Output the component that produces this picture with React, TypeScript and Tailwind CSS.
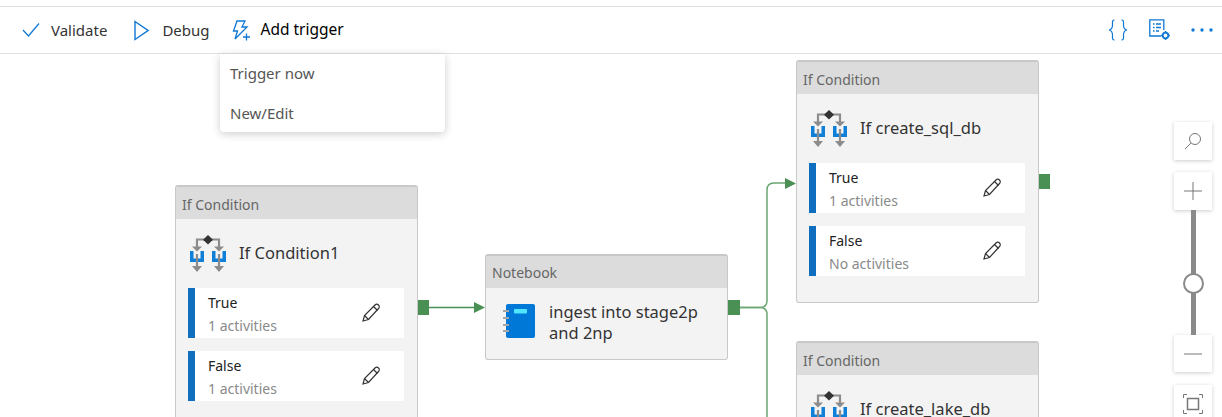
import React from 'react'

const font = { fontFamily: '"Noto Sans", sans-serif' }

function IfIcon() {
  return (
    <svg width="38" height="38" viewBox="0 0 38 38" className="shrink-0">
      <path d="M8 12V4.500H30V12" fill="none" stroke="#8c8c8c" strokeWidth="2.200" />
      <path d="M3 11.500h10L8 16.500zM25 11.500h10L30 16.500z" fill="#8c8c8c" />
      <path d="M19 0l5 4.700-5 4.700-5-4.700z" fill="#333" />
      <path d="M1 16v11h14V16h-3.500v7.500h-7V16zM23 16v11h14V16h-3.500v7.500h-7V16z" fill="#0f7fd8" />
      <path d="M8 19v13M30 19v13" stroke="#8c8c8c" strokeWidth="2.200" />
      <path d="M3 31h10l-5 6zM25 31h10l-5 6z" fill="#8c8c8c" />
    </svg>
  )
}

function NotebookIcon() {
  return (
    <svg width="32" height="38" viewBox="0 0 32 38" className="shrink-0">
      <rect x="3" y="1" width="29" height="34" rx="2" fill="#0078d7" />
      <rect x="11" y="6" width="13" height="4.500" rx="1" fill="#50e6ff" />
      <path d="M0 8h6M0 15h6M0 22h6M0 28h6" stroke="#a6a6a6" strokeWidth="2" />
    </svg>
  )
}

function EditIcon() {
  return (
    <svg width="19" height="19" viewBox="0 0 19 19" fill="none" stroke="#333" strokeWidth="1.200">
      <path d="M1 18l1.500-5.500L13 2c1-1 2.500-1 3.500 0s1 2.500 0 3.500L6.500 16.500z" />
      <path d="M11.500 3.500l4 4M2.500 12.500l4 4" />
    </svg>
  )
}

function Branch({ label, sub }: { label: string; sub: string }) {
  return (
    <div className="flex h-[50px] bg-white">
      <div className="w-[7px] bg-[#106ebe]" />
      <div className="flex-1 pl-[13px] pt-[5px]">
        <div className="text-[14px] leading-[20px] text-[#222]">{label}</div>
        <div className="mt-[3px] text-[14px] leading-[20px] text-[#8a8a8a]">{sub}</div>
      </div>
      <div className="flex w-[42px] items-start pt-[15px]">
        <EditIcon />
      </div>
    </div>
  )
}

function IfCard({ title, branches, className }: { title: string; branches: [string, string][]; className: string }) {
  return (
    <div className={`absolute w-[243px] h-[243px] rounded-[3px] border border-[#c8c8c8] bg-[#f3f3f3] border-t-2 ${className}`}>
      <div className="h-[32px] bg-[#dcdcdc] pl-[6px] text-[14px] leading-[36px] text-[#666]">If Condition</div>
      <div className="flex h-[69px] items-center gap-[12px] pl-[13px] pr-2">
        <IfIcon />
        <span className="text-[16.500px] text-[#333]">{title}</span>
      </div>
      <div className="flex flex-col gap-[13px] pl-[12px] pr-[13px]">
        {branches.map(([l, s]) => (
          <Branch key={l} label={l} sub={s} />
        ))}
      </div>
    </div>
  )
}

export default function App() {
  return (
    <div className="flex h-[417px] w-[1222px] flex-col overflow-hidden bg-white" style={font}>
      <div className="h-[6px] bg-white" />
      {/* Toolbar */}
      <header className="flex h-[48px] shrink-0 items-center justify-between border-y border-[#e1e1e1] bg-white pr-[9px]">
        <div className="flex items-center text-[15px]">
          <div className="flex items-center gap-[11px] pl-[22px]">
            <svg width="18" height="16" viewBox="0 0 18 16" fill="none" stroke="#0f78d4" strokeWidth="1.300">
              <path d="M1 8l5.500 6L17 1.500" />
            </svg>
            <span className="text-[#333]">Validate</span>
          </div>
          <div className="ml-[27px] flex items-center gap-[13px]">
            <svg width="15" height="21" viewBox="0 0 15 21" fill="none" stroke="#0f78d4" strokeWidth="1.400">
              <path d="M1 1.500v18L14 10.500z" />
            </svg>
            <span className="text-[#333]">Debug</span>
          </div>
          <div className="ml-[22px] flex items-center gap-[10px]">
            <svg width="19" height="21" viewBox="0 0 19 21" fill="none" stroke="#0f78d4" strokeWidth="1.300">
              <path d="M5 1h8l-3 6h5L3 19l2.500-8H1.500z" />
              <path d="M14.500 13.500v7M11 17h7" />
            </svg>
            <span className="text-[15.500px] text-black">Add trigger</span>
          </div>
        </div>
        <div className="flex items-center">
          <svg width="20" height="22" viewBox="0 0 20 22" fill="none" stroke="#0f78d4" strokeWidth="1.200">
            <path d="M6.500 1C4 1 4.500 3 4.500 6c0 3-1 4.500-3.500 5 2.500.5 3.500 2 3.500 5 0 3-.5 5 2 5" />
            <path d="M13.500 1c2.500 0 2 2 2 5 0 3 1 4.500 3.500 5-2.500.5-3.500 2-3.500 5 0 3 .5 5-2 5" />
          </svg>
          <svg width="22" height="22" viewBox="0 0 22 22" fill="none" stroke="#0f78d4" strokeWidth="1.300" className="ml-[21px]">
            <path d="M12 17H.8V.8h14V11" />
            <path d="M4 5h1.500M7 5h5M4 8.500h1.500M7 8.500h5M4 12h1.500M7 12h3" />
            <circle cx="16.500" cy="16.500" r="2.800" strokeWidth="1.800" />
            <path d="M16.500 12v1.500M16.500 19.500V21M12 16.500h1.500M19.500 16.500H21" strokeWidth="1.500" />
          </svg>
          <svg width="22" height="4" viewBox="0 0 22 4" className="ml-[20px]" fill="#0f78d4">
            <circle cx="2" cy="2" r="1.700" />
            <circle cx="11" cy="2" r="1.700" />
            <circle cx="20" cy="2" r="1.700" />
          </svg>
        </div>
      </header>

      {/* Canvas */}
      <main className="relative flex-1">
        <svg width="1222" height="363" className="absolute left-0 top-0" fill="none" stroke="#4a8f53">
          <path d="M429 253.500H478" strokeWidth="1.500" />
          <path d="M739 253.500H760q7 0 7-7V136q0-7 7-7H786" strokeWidth="1.500" stroke="#6aa672" />
          <path d="M739 253.500H760q7 0 7 7V363" strokeWidth="1.500" stroke="#6aa672" />
          <path d="M474 248l11 5.500-11 5.500zM785 124l11 5.500-11 5.500z" fill="#4a8f53" stroke="none" />
          <rect x="417" y="246" width="12" height="15" fill="#4a8f53" stroke="none" />
          <rect x="728" y="246" width="12" height="15" fill="#4a8f53" stroke="none" />
          <rect x="1038" y="120" width="12" height="15" fill="#4a8f53" stroke="none" />
        </svg>

        <IfCard title="If Condition1" className="left-[175px] top-[131px]" branches={[['True', '1 activities'], ['False', '1 activities']]} />
        <IfCard title="If create_sql_db" className="left-[796px] top-[6px]" branches={[['True', '1 activities'], ['False', 'No activities']]} />
        <IfCard title="If create_lake_db" className="left-[796px] top-[287px]" branches={[['True', '1 activities'], ['False', 'No activities']]} />

        <div className="absolute left-[485px] top-[200px] h-[106px] w-[243px] rounded-[3px] border border-t-2 border-[#c8c8c8] bg-[#f3f3f3]">
          <div className="h-[32px] bg-[#dcdcdc] pl-[6px] text-[14px] leading-[34px] text-[#666]">Notebook</div>
          <div className="flex items-center gap-[14px] pl-[17px] pt-[13px]">
            <NotebookIcon />
            <div className="text-[16.500px] leading-[21px] text-[#333]">ingest into stage2p<br />and 2np</div>
          </div>
        </div>

        {/* Trigger dropdown */}
        <div className="absolute left-[220px] top-0 h-[78px] w-[225px] rounded-b-[4px] bg-white text-[15px] text-[#555] shadow-[0_2px_8px_rgba(0,0,0,0.2)]">
          <div className="pl-[10px] pt-[9px] leading-[20px]">Trigger now</div>
          <div className="pl-[10px] pt-[20px] leading-[20px]">New/Edit</div>
        </div>

        {/* Zoom controls */}
        <div className="absolute left-[1174px] top-[68px] flex w-[38px] flex-col items-center">
          <div className="flex h-[38px] w-[38px] items-center justify-center bg-white shadow-[0_1px_4px_rgba(0,0,0,0.2)]">
            <svg width="18" height="18" viewBox="0 0 18 18" fill="none" stroke="#777" strokeWidth="1">
              <circle cx="11" cy="7" r="5.500" />
              <path d="M7 11l-6 6" />
            </svg>
          </div>
          <div className="mt-[12px] flex h-[38px] w-[38px] items-center justify-center bg-white shadow-[0_1px_4px_rgba(0,0,0,0.2)]">
            <svg width="20" height="20" viewBox="0 0 20 20" stroke="#777" strokeWidth="1">
              <path d="M10 1v18M1 10h18" />
            </svg>
          </div>
          <div className="relative h-[125px] w-[5px] bg-[#8a8a8a]">
            <div className="absolute left-[-8px] top-[63px] h-[21px] w-[21px] rounded-full border-2 border-[#8a8a8a] bg-white" />
          </div>
          <div className="flex h-[37px] w-[38px] items-center justify-center bg-white shadow-[0_1px_4px_rgba(0,0,0,0.2)]">
            <svg width="20" height="20" viewBox="0 0 20 20" stroke="#777" strokeWidth="1">
              <path d="M1 10h18" />
            </svg>
          </div>
          <div className="mt-[13px] flex h-[38px] w-[38px] items-center justify-center bg-white shadow-[0_1px_4px_rgba(0,0,0,0.2)]">
            <svg width="20" height="20" viewBox="0 0 20 20" fill="none" stroke="#777" strokeWidth="1">
              <rect x="4.500" y="4.500" width="11" height="11" strokeWidth="1.500" />
              <path d="M.5 4V.5H4M16 .5h3.500V4M.5 16v3.500H4M16 19.500h3.500V16" />
            </svg>
          </div>
        </div>
      </main>
    </div>
  )
}
